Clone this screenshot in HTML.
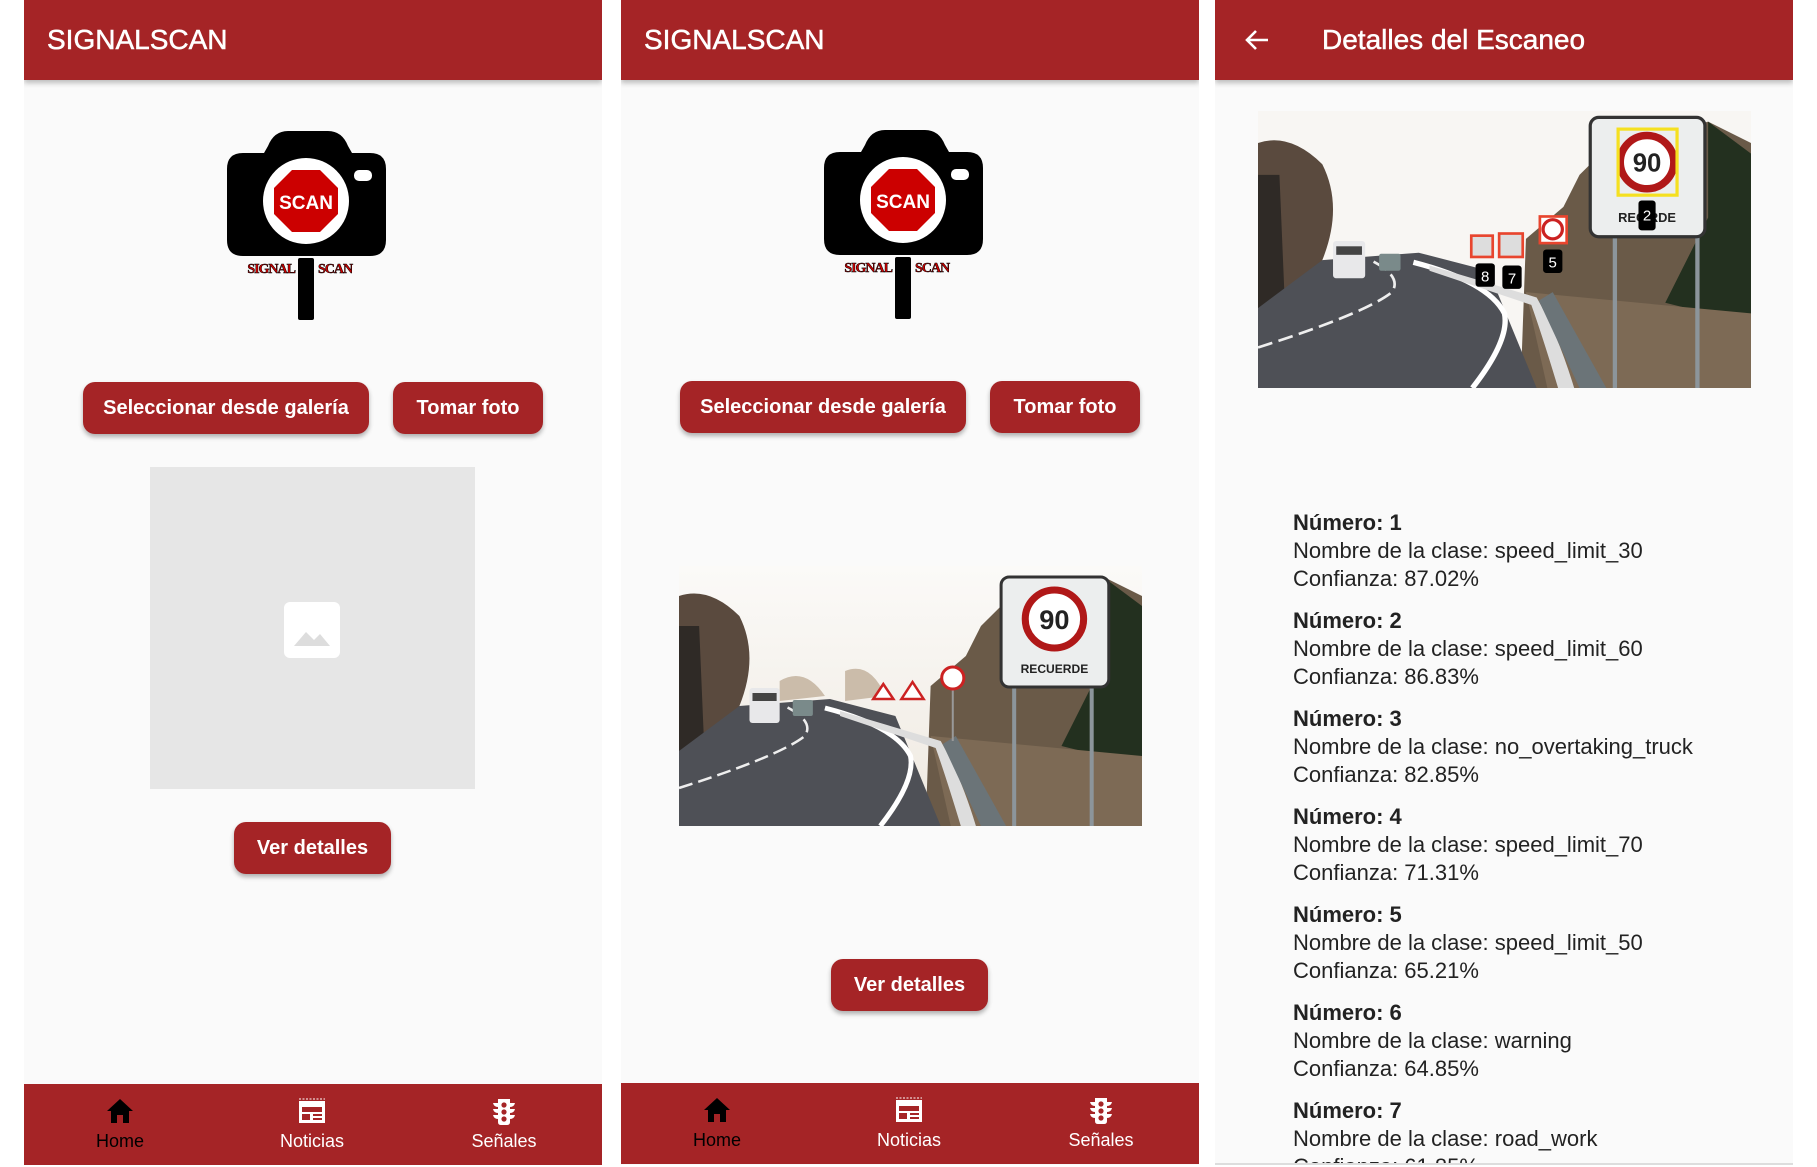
<!DOCTYPE html>
<html><head><meta charset="utf-8"><style>
*{margin:0;padding:0;box-sizing:border-box}
body{width:1817px;height:1165px;background:#fff;position:relative;overflow:hidden;font-family:"Liberation Sans",Arial,sans-serif}
.panel{position:absolute;top:0;width:578px;height:1165px;background:#fafafa;overflow:hidden}
.hdr{position:absolute;left:0;top:0;width:100%;height:80px;background:#a52426;box-shadow:0 3px 5px rgba(0,0,0,.25);color:#fff;font-size:28px;line-height:80px;padding-left:23px;z-index:2;-webkit-text-stroke:.5px #fff}
.btn{position:absolute;height:52px;background:#a52426;color:#fff;border-radius:12px;font-size:20px;font-weight:bold;line-height:52px;text-align:center;box-shadow:0 3px 5px rgba(0,0,0,.3)}
.nav{position:absolute;left:0;top:1084px;width:100%;height:81px;background:#a52426}
.ni{position:absolute;top:0;width:120px;margin-left:-60px;text-align:center;color:#fff;font-size:18px}
.ni svg{display:block;margin:14px auto 7px}
.logo{position:absolute}
.ph{position:absolute}
.txt{position:absolute;left:78px;top:509px;font-size:22px;color:#222;line-height:28px}
.txt b{display:block}
.txt div{margin-bottom:14px}
</style></head><body>

<!-- Panel 1 -->
<div class="panel" style="left:24px">
 <div class="hdr">SIGNALSCAN</div>
 <svg class="logo" style="left:200px;top:128px" width="180" height="200" viewBox="0 0 180 200">
  <path d="M44 18 Q50 3 64 3 L104 3 Q118 3 124 18 L128 25 L146 25 Q162 25 162 41 L162 112 Q162 128 146 128 L19 128 Q3 128 3 112 L3 41 Q3 25 19 25 L40 25 Z" fill="#000"/>
  <ellipse cx="82" cy="73" rx="43" ry="43" fill="#fff"/>
  <rect x="130" y="42" width="18" height="11" rx="5" fill="#fff"/>
  <polygon points="68,42 96,42 114,60 114,86 96,104 68,104 50,86 50,60" fill="#cc0000"/>
  <text x="82" y="81" font-size="19" fill="#fff" text-anchor="middle" font-family="Liberation Sans" font-weight="bold">SCAN</text>
  <rect x="74" y="130" width="16" height="62" rx="2" fill="#000"/>
  <text x="71" y="145" font-size="14" font-weight="bold" fill="#c00" font-family="Liberation Serif" stroke="#000" stroke-width=".5" text-anchor="end" letter-spacing="-1">SIGNAL</text>
  <text x="94" y="145" font-size="14" font-weight="bold" fill="#c00" font-family="Liberation Serif" stroke="#000" stroke-width=".5" letter-spacing="-1">SCAN</text>
 </svg>
 <div class="btn" style="left:59px;top:382px;width:286px">Seleccionar desde galería</div>
 <div class="btn" style="left:369px;top:382px;width:150px">Tomar foto</div>
 <div style="position:absolute;left:126px;top:467px;width:325px;height:322px;background:#e6e6e6">
  <svg style="position:absolute;left:134px;top:135px" width="56" height="56" viewBox="0 0 56 56"><rect width="56" height="56" rx="6" fill="#fff"/><path d="M10 44 L22 30 L30 38 L36 32 L46 44 Z" fill="#ddd"/></svg>
 </div>
 <div class="btn" style="left:210px;top:822px;width:157px">Ver detalles</div>
 <div class="nav">
  <div class="ni" style="left:96px;color:#000"><svg width="28" height="26" viewBox="0 0 28 26"><path d="M14 1 L1 13 L5 13 L5 25 L11 25 L11 17 L17 17 L17 25 L23 25 L23 13 L27 13 Z" fill="#000"/></svg>Home</div>
  <div class="ni" style="left:288px"><svg width="30" height="26" viewBox="0 0 30 26"><path d="M2 3 L28 3 L28 25 L2 25 Z M5 9 L25 9 L25 14 L5 14 Z M5 16 L13 16 L13 22 L5 22 Z M16 16 L25 16 L25 18 L16 18 Z M16 20 L25 20 L25 22 L16 22 Z" fill="#fff" fill-rule="evenodd"/><path d="M2 1 h26" stroke="#fff" stroke-dasharray="2 1.5"/></svg>Noticias</div>
  <div class="ni" style="left:480px"><svg width="26" height="28" viewBox="0 0 26 28" style="margin-bottom:5px"><path d="M7 1 L19 1 L19 5 L24 5 Q23 9 19 9 L19 11 L24 11 Q23 15 19 15 L19 17 L24 17 Q23 21 19 21 L19 24 Q19 27 16 27 L10 27 Q7 27 7 24 L7 21 Q3 21 2 17 L7 17 L7 15 Q3 15 2 11 L7 11 L7 9 Q3 9 2 5 L7 5 Z" fill="#fff"/><circle cx="13" cy="7" r="2.6" fill="#a52426"/><circle cx="13" cy="14" r="2.6" fill="#a52426"/><circle cx="13" cy="21" r="2.6" fill="#a52426"/></svg>Señales</div>
 </div>
</div>

<!-- Panel 2 -->
<div class="panel" style="left:621px">
 <div class="hdr">SIGNALSCAN</div>
 <svg class="logo" style="left:200px;top:127px" width="180" height="200" viewBox="0 0 180 200">
  <path d="M44 18 Q50 3 64 3 L104 3 Q118 3 124 18 L128 25 L146 25 Q162 25 162 41 L162 112 Q162 128 146 128 L19 128 Q3 128 3 112 L3 41 Q3 25 19 25 L40 25 Z" fill="#000"/>
  <ellipse cx="82" cy="73" rx="43" ry="43" fill="#fff"/>
  <rect x="130" y="42" width="18" height="11" rx="5" fill="#fff"/>
  <polygon points="68,42 96,42 114,60 114,86 96,104 68,104 50,86 50,60" fill="#cc0000"/>
  <text x="82" y="81" font-size="19" fill="#fff" text-anchor="middle" font-family="Liberation Sans" font-weight="bold">SCAN</text>
  <rect x="74" y="130" width="16" height="62" rx="2" fill="#000"/>
  <text x="71" y="145" font-size="14" font-weight="bold" fill="#c00" font-family="Liberation Serif" stroke="#000" stroke-width=".5" text-anchor="end" letter-spacing="-1">SIGNAL</text>
  <text x="94" y="145" font-size="14" font-weight="bold" fill="#c00" font-family="Liberation Serif" stroke="#000" stroke-width=".5" letter-spacing="-1">SCAN</text>
 </svg>
 <div class="btn" style="left:59px;top:381px;width:286px">Seleccionar desde galería</div>
 <div class="btn" style="left:369px;top:381px;width:150px">Tomar foto</div>
 <svg class="ph" style="left:58px;top:566px" width="463" height="260" viewBox="0 0 460 260" preserveAspectRatio="none">
  <defs><linearGradient id="sk" x1="0" y1="0" x2="0" y2="1"><stop offset="0" stop-color="#fbfaf8"/><stop offset="1" stop-color="#efe9e0"/></linearGradient></defs>
  <rect width="460" height="260" fill="url(#sk)"/>
  <path d="M0 30 Q30 20 60 50 Q80 90 60 140 L50 170 L0 180 Z" fill="#5a4a3e"/>
  <path d="M0 60 L20 60 L25 180 L0 185 Z" fill="#2f2a26"/>
  <path d="M100 115 Q125 100 145 130 L100 135 Z M165 105 Q190 95 205 130 L165 135Z" fill="#cbbcaa"/>
  <path d="M250 120 L285 90 L300 60 L320 40 L420 10 L460 30 L460 260 L245 260 Z" fill="#6a5a48"/>
  <path d="M420 10 L460 40 L460 200 L380 180 L420 100 Z" fill="#23301f"/>
  <path d="M250 170 L460 190 L460 260 L270 260 Z" fill="#7d6a55"/>
  <path d="M0 185 L60 140 L150 133 L215 150 L260 260 L0 260 Z" fill="#4e5056"/>
  <path d="M145 142 Q215 160 230 190 Q235 215 200 260" stroke="#fff" stroke-width="5" fill="none"/>
  <path d="M0 222 Q100 190 125 170 Q135 155 105 140" stroke="#eee" stroke-width="2.5" fill="none" stroke-dasharray="14 6"/>
  <path d="M160 145 L260 175 Q280 210 295 260 L280 260 Q265 210 255 182 L160 150 Z" fill="#ddd"/>
  <path d="M262 178 L300 260 L325 260 L275 170 Z" fill="#6b7478"/>
  <rect x="70" y="122" width="30" height="35" rx="3" fill="#e8e8ea"/><rect x="73" y="127" width="24" height="8" fill="#444"/>
  <rect x="113" y="134" width="20" height="16" rx="2" fill="#7a8a8a"/>
  <polygon points="203,118 193,133 213,133" fill="#fff" stroke="#c22" stroke-width="2.5"/>
  <polygon points="232,116 221,133 243,133" fill="#fff" stroke="#c22" stroke-width="2.5"/>
  <line x1="272" y1="124" x2="272" y2="175" stroke="#999" stroke-width="2"/>
  <circle cx="272" cy="112" r="11" fill="#fff" stroke="#c22" stroke-width="3"/>
  <rect x="331" y="118" width="4" height="142" fill="#8c959b"/><rect x="408" y="118" width="4" height="142" fill="#8c959b"/>
  <rect x="320" y="11" width="107" height="110" rx="8" fill="#eceeee" stroke="#333" stroke-width="3"/>
  <circle cx="373" cy="53" r="29" fill="#fff" stroke="#b01818" stroke-width="7"/>
  <text x="373" y="63" font-size="27" font-weight="bold" text-anchor="middle" fill="#222" font-family="Liberation Sans">90</text>
  <text x="373" y="107" font-size="12" font-weight="bold" text-anchor="middle" fill="#222" font-family="Liberation Sans">RECUERDE</text>
 </svg>
 <div class="btn" style="left:210px;top:959px;width:157px">Ver detalles</div>
 <div class="nav" style="top:1083px">
  <div class="ni" style="left:96px;color:#000"><svg width="28" height="26" viewBox="0 0 28 26"><path d="M14 1 L1 13 L5 13 L5 25 L11 25 L11 17 L17 17 L17 25 L23 25 L23 13 L27 13 Z" fill="#000"/></svg>Home</div>
  <div class="ni" style="left:288px"><svg width="30" height="26" viewBox="0 0 30 26"><path d="M2 3 L28 3 L28 25 L2 25 Z M5 9 L25 9 L25 14 L5 14 Z M5 16 L13 16 L13 22 L5 22 Z M16 16 L25 16 L25 18 L16 18 Z M16 20 L25 20 L25 22 L16 22 Z" fill="#fff" fill-rule="evenodd"/><path d="M2 1 h26" stroke="#fff" stroke-dasharray="2 1.5"/></svg>Noticias</div>
  <div class="ni" style="left:480px"><svg width="26" height="28" viewBox="0 0 26 28" style="margin-bottom:5px"><path d="M7 1 L19 1 L19 5 L24 5 Q23 9 19 9 L19 11 L24 11 Q23 15 19 15 L19 17 L24 17 Q23 21 19 21 L19 24 Q19 27 16 27 L10 27 Q7 27 7 24 L7 21 Q3 21 2 17 L7 17 L7 15 Q3 15 2 11 L7 11 L7 9 Q3 9 2 5 L7 5 Z" fill="#fff"/><circle cx="13" cy="7" r="2.6" fill="#a52426"/><circle cx="13" cy="14" r="2.6" fill="#a52426"/><circle cx="13" cy="21" r="2.6" fill="#a52426"/></svg>Señales</div>
 </div>
</div>

<!-- Panel 3 -->
<div class="panel" style="left:1215px;height:1167px">
 <div class="hdr" style="padding-left:107px">Detalles del Escaneo
  <svg style="position:absolute;left:29px;top:27px" width="26" height="26" viewBox="0 0 26 26"><path d="M24 13 L3 13 M12 4 L3 13 L12 22" stroke="#fff" stroke-width="2.6" fill="none"/></svg>
 </div>
 <svg class="ph" style="left:43px;top:111px" width="493" height="277" viewBox="0 0 460 260" preserveAspectRatio="none">
  <rect width="460" height="260" fill="#f8f6f3"/>
  <path d="M0 30 Q30 20 60 50 Q80 90 60 140 L50 170 L0 180 Z" fill="#5a4a3e"/>
  <path d="M0 60 L20 60 L25 180 L0 185 Z" fill="#2f2a26"/>
  <path d="M250 120 L285 90 L300 60 L320 40 L420 10 L460 30 L460 260 L245 260 Z" fill="#6a5a48"/>
  <path d="M420 10 L460 40 L460 200 L380 180 L420 100 Z" fill="#23301f"/>
  <path d="M250 170 L460 190 L460 260 L270 260 Z" fill="#7d6a55"/>
  <path d="M0 185 L60 140 L150 133 L215 150 L260 260 L0 260 Z" fill="#4e5056"/>
  <path d="M145 142 Q215 160 230 190 Q235 215 200 260" stroke="#fff" stroke-width="5" fill="none"/>
  <path d="M0 222 Q100 190 125 170 Q135 155 105 140" stroke="#eee" stroke-width="2.5" fill="none" stroke-dasharray="14 6"/>
  <path d="M160 145 L260 175 Q280 210 295 260 L280 260 Q265 210 255 182 L160 150 Z" fill="#ddd"/>
  <path d="M262 178 L300 260 L325 260 L275 170 Z" fill="#6b7478"/>
  <rect x="70" y="122" width="30" height="35" rx="3" fill="#e8e8ea"/><rect x="73" y="127" width="24" height="8" fill="#444"/>
  <rect x="113" y="134" width="20" height="16" rx="2" fill="#7a8a8a"/>
  <rect x="199" y="117" width="20" height="20" fill="#ddd" stroke="#e8452e" stroke-width="2.5"/>
  <rect x="225" y="115" width="22" height="22" fill="#ddd" stroke="#e8452e" stroke-width="2.5"/>
  <rect x="263" y="99" width="25" height="25" fill="#fff" stroke="#e8452e" stroke-width="2.5"/>
  <circle cx="275" cy="111" r="9" fill="#fff" stroke="#c22" stroke-width="3"/>
  <rect x="203" y="143" width="18" height="22" rx="3" fill="#000"/><text x="212" y="160" font-size="14" fill="#fff" text-anchor="middle" font-family="Liberation Sans">8</text>
  <rect x="228" y="145" width="18" height="22" rx="3" fill="#000"/><text x="237" y="162" font-size="14" fill="#fff" text-anchor="middle" font-family="Liberation Sans">7</text>
  <rect x="266" y="130" width="18" height="22" rx="3" fill="#000"/><text x="275" y="147" font-size="14" fill="#fff" text-anchor="middle" font-family="Liberation Sans">5</text>
  <rect x="331" y="118" width="4" height="142" fill="#8c959b"/><rect x="408" y="118" width="4" height="142" fill="#8c959b"/>
  <rect x="310" y="6" width="107" height="112" rx="8" fill="#eceeee" stroke="#333" stroke-width="3"/>
  <circle cx="363" cy="48" r="25" fill="#fff" stroke="#b01818" stroke-width="7"/>
  <text x="363" y="57" font-size="24" font-weight="bold" text-anchor="middle" fill="#222" font-family="Liberation Sans">90</text>
  <rect x="336" y="17" width="55" height="62" fill="none" stroke="#f5e020" stroke-width="3"/>
  <text x="363" y="104" font-size="12" font-weight="bold" text-anchor="middle" fill="#222" font-family="Liberation Sans">REC    RDE</text>
  <rect x="355" y="84" width="16" height="28" rx="3" fill="#000"/><text x="363" y="103" font-size="14" fill="#fff" text-anchor="middle" font-family="Liberation Sans">2</text>
 </svg>
 <div class="txt">
  <div><b>Número: 1</b>Nombre de la clase: speed_limit_30<br>Confianza: 87.02%</div>
  <div><b>Número: 2</b>Nombre de la clase: speed_limit_60<br>Confianza: 86.83%</div>
  <div><b>Número: 3</b>Nombre de la clase: no_overtaking_truck<br>Confianza: 82.85%</div>
  <div><b>Número: 4</b>Nombre de la clase: speed_limit_70<br>Confianza: 71.31%</div>
  <div><b>Número: 5</b>Nombre de la clase: speed_limit_50<br>Confianza: 65.21%</div>
  <div><b>Número: 6</b>Nombre de la clase: warning<br>Confianza: 64.85%</div>
  <div><b>Número: 7</b>Nombre de la clase: road_work<br>Confianza: 61.85%</div>
 </div>
 <div style="position:absolute;left:0;top:1163px;width:100%;height:4px;background:#fff;border-top:2px solid #ddd"></div>
</div>
</body></html>
